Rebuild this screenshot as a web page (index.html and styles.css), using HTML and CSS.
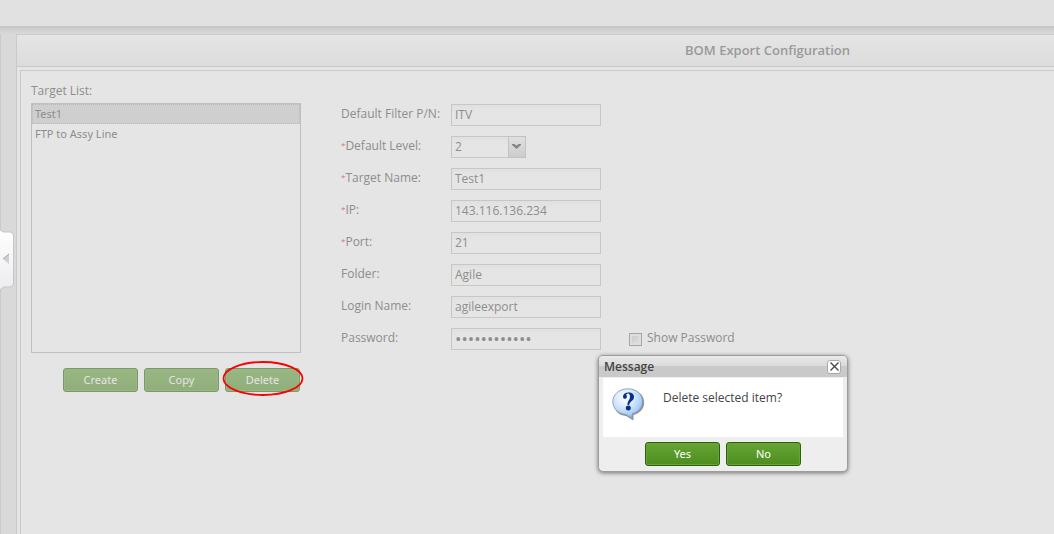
FILE: index.html
```html
<!DOCTYPE html>
<html lang="en">
<head>
<meta charset="utf-8">
<title>BOM Export Configuration</title>
<link rel="stylesheet" href="styles.css">
</head>
<body>
<header class="topbar"></header>
<div class="workspace">
  <aside class="rail">
    <button class="handle" type="button" aria-label="Expand menu">
      <svg width="15" height="62" viewBox="0 0 15 62">
        <defs><linearGradient id="hg" x1="0" y1="0" x2="0" y2="1"><stop offset="0" stop-color="#fff"/><stop offset="1" stop-color="#ececf0"/></linearGradient></defs>
        <path d="M-1 0L3 3H10Q13.500 3 13.500 7V54Q13.500 58 10 58H4L-1 61.500Z" fill="url(#hg)" stroke="#c6c6c6"/>
        <path d="M3 30L9 25V35Z" fill="#cfcfcf"/><path d="M3 30L9 25" stroke="#a4a4a4" fill="none"/>
      </svg>
    </button>
  </aside>
  <main class="panel">
    <h1 class="panel-title">BOM Export Configuration</h1>
    <form class="content">
      <section class="targets">
        <label class="list-label" for="targets">Target List:</label>
        <select class="listbox" id="targets" size="12">
          <option selected>Test1</option>
          <option>FTP to Assy Line</option>
        </select>
        <div class="actions">
          <button class="btn muted" type="button">Create</button>
          <button class="btn muted" type="button">Copy</button>
          <span class="marked">
            <button class="btn muted" type="button">Delete</button>
            <svg class="ellipse" width="82" height="36" viewBox="0 0 82 36"><ellipse cx="41" cy="17.500" rx="39.500" ry="16.500" fill="none" stroke="#fa0000" stroke-width="1.800"/></svg>
          </span>
        </div>
      </section>
      <section class="fields">
        <div class="row"><label for="pn">Default Filter P/N:</label><input class="text" id="pn" type="text" value="ITV"></div>
        <div class="row"><label for="level"><span class="req">*</span>Default Level:</label>
          <span class="combo"><select id="level" class="combo-select"><option>1</option><option selected>2</option><option>3</option></select>
            <span class="trigger"><svg width="10" height="6" viewBox="0 0 10 6"><path d="M0 0H2.500L4.500 1.700L6.500 0H9V1L4.500 5L0 1Z" fill="#858585"/></svg></span></span></div>
        <div class="row"><label for="name"><span class="req">*</span>Target Name:</label><input class="text" id="name" type="text" value="Test1"></div>
        <div class="row"><label for="ip"><span class="req">*</span>IP:</label><input class="text" id="ip" type="text" value="143.116.136.234"></div>
        <div class="row"><label for="port"><span class="req">*</span>Port:</label><input class="text" id="port" type="text" value="21"></div>
        <div class="row"><label for="folder">Folder:</label><input class="text" id="folder" type="text" value="Agile"></div>
        <div class="row"><label for="login">Login Name:</label><input class="text" id="login" type="text" value="agileexport"></div>
        <div class="row"><label for="pass">Password:</label><input class="text secret" id="pass" type="password" value="abcdefghijkl">
          <input class="check" id="show" type="checkbox"><label class="show" for="show">Show Password</label></div>
      </section>
    </form>
  </main>
</div>
<div class="dialog" role="dialog" aria-labelledby="dlg-title">
  <div class="dialog-head">
    <h2 class="dialog-title" id="dlg-title">Message</h2>
    <button class="close" type="button" aria-label="Close"><svg width="9" height="9" viewBox="0 0 9 9"><path d="M.5 .5L8.500 8.500M8.500 .5L.5 8.500" stroke="#444" stroke-width="1.300"/></svg></button>
  </div>
  <div class="dialog-body">
    <svg class="question" width="34" height="34" viewBox="0 0 34 34" role="img" aria-label="Question">
      <defs>
        <radialGradient id="bg" cx=".4" cy=".3" r=".75"><stop offset="0" stop-color="#fff"/><stop offset=".4" stop-color="#d9eafd"/><stop offset=".75" stop-color="#a9cffa"/><stop offset="1" stop-color="#6a98d0"/></radialGradient>
      </defs>
      <path d="M18 1.500C27 1.500 33.200 7 33.200 14.500C33.200 20.500 29.500 25 22.500 27V32.500L15 28C7 27.500 3 22 3 15C3 7.500 9 1.500 18 1.500Z" fill="#666" opacity=".7"/>
      <path d="M17 .8C26 .8 31.500 6.500 31.500 13.500C31.500 19.500 28 24 21.500 25.500L21 31L15.500 26.500C7 26 1.800 20.500 1.800 13.500C1.800 6.500 8 .8 17 .8Z" fill="url(#bg)" stroke="#8796ad" stroke-width=".8"/>
      <path d="M17.500 4.500C21.500 4.500 23 6.500 23 9C23 13 18.600 13.200 18.200 17H16.600C16.200 12.800 19 12 19 9C19 7 18.500 5.800 17 5.600C15.500 5.600 15 6.500 15.600 7.500C16.500 9.200 15.500 10.800 14 10.800C12.800 10.800 12 10 12 8.700C12 6.200 14 4.500 17.500 4.500Z" fill="#0b2f86"/>
      <circle cx="17.300" cy="20" r="2.500" fill="#0b2f86"/>
    </svg>
    <p class="message">Delete selected item?</p>
  </div>
  <div class="dialog-actions"><button class="btn" type="button">Yes</button><button class="btn" type="button">No</button></div>
</div>
</body>
</html>
```
FILE: styles.css
```css
* { box-sizing: border-box; }
body {
  margin: 0;
  height: 100vh;
  display: flex;
  flex-direction: column;
  overflow: hidden;
  background: #d9d9d9;
  color: #8d8d8d;
  font: 12px/16px "Trebuchet MS", "Open Sans", sans-serif;
}
button, input, select { font: inherit; color: inherit; margin: 0; }
.topbar { flex: none; height: 28px; background: #e1e1e1; border-bottom: 2px solid #c7c7c7; }
.workspace {
  flex: 1;
  display: flex;
  padding-top: 6px;
  background: linear-gradient(#cbcbcb, #d9d9d9 6px);
}
.rail { flex: none; width: 16px; border-left: 1px solid #cacaca; position: relative; }
.handle {
  position: absolute;
  left: -1px;
  top: 195px;
  padding: 0;
  border: 0;
  background: none;
  line-height: 0;
}
.panel {
  flex: 1;
  display: flex;
  flex-direction: column;
  border: 1px solid #cacaca;
  border-width: 1px 0 0 1px;
  background: #e5e5e5;
}
.panel-title {
  margin: 0;
  padding: 0 0 0 668px;
  font-size: 13px;
  line-height: 31px;
  font-weight: 600;
  white-space: nowrap;
  color: #999;
  background: linear-gradient(#e5e5e5, #dcdcdc);
  border-bottom: 1px solid #c8c8c8;
}
.content {
  flex: 1;
  display: flex;
  align-items: flex-start;
  gap: 40px;
  margin: 3px 0 0 3px;
  padding: 12px 0 0 10px;
  border: 1px solid #cacaca;
  border-width: 1px 0 0 1px;
}
.targets { width: 270px; display: flex; flex-direction: column; }
.list-label { line-height: 16px; margin-bottom: 4px; }
.listbox {
  height: 250px;
  padding: 0;
  border: 1px solid #bfbfc6;
  border-radius: 0;
  background: #e5e5e5;
  font-family: "Noto Sans", sans-serif;
  font-size: 11px;
  outline: 0;
  overflow: hidden;
}
.listbox option { padding: 2px 3px 0; height: 20px; line-height: 18px; min-height: 20px; color: #8d8d8d; }
.listbox option:checked {
  background: #cfcfcf linear-gradient(#cfcfcf, #cfcfcf);
  outline: 1px dotted #b8b8b8;
  outline-offset: -1px;
}
.actions { display: flex; justify-content: flex-end; gap: 6px; margin: 15px 1px 0 0; }
.btn {
  display: block;
  width: 75px;
  height: 24px;
  padding: 0;
  border: 1px solid #2c6108;
  border-radius: 3px;
  background: linear-gradient(#66a535, #4d8d1f);
  box-shadow: inset 0 0 0 1px #66a33a;
  color: #fff;
  font-family: "Noto Sans", sans-serif;
  font-size: 11px;
}
.btn.muted {
  border-color: #7c9769;
  background: linear-gradient(#99b782, #8fae79);
  box-shadow: inset 0 0 0 1px #9bb786;
  color: #e5e5e5;
}
.marked { position: relative; }
.ellipse { position: absolute; left: -3px; top: -7px; pointer-events: none; }
.fields { display: grid; gap: 10px; padding-top: 21px; }
.row { display: flex; align-items: center; height: 22px; }
.row > label:first-child { width: 110px; padding-bottom: 3px; white-space: nowrap; }
.req { color: #e86868; font-size: 8px; vertical-align: 2px; line-height: 8px; }
.text {
  width: 150px;
  height: 22px;
  padding: 0 3px 1px;
  border: 1px solid #c7c7c7;
  border-radius: 0;
  background: linear-gradient(#dfe1e0, #e5e5e5 8px);
  outline: 0;
}
.secret { font-size: 17px; }
.combo { position: relative; width: 75px; height: 22px; }
.combo-select {
  appearance: none;
  width: 75px;
  height: 22px;
  padding: 0 20px 0 3px;
  border: 1px solid #c7c7c7;
  border-radius: 0;
  background: linear-gradient(#dfe1e0, #e5e5e5 8px);
}
.trigger {
  position: absolute;
  right: 0;
  top: 0;
  width: 18px;
  height: 22px;
  display: grid;
  place-items: center;
  border: 1px solid #c2c2c2;
  background: linear-gradient(#e0e0e0, #cccccc);
  pointer-events: none;
}
.check {
  appearance: none;
  width: 13px;
  height: 13px;
  margin-left: 28px;
  border: 1px solid #a6a6a6;
  background: linear-gradient(135deg, #c6c6c6, #e5e5e5);
  box-shadow: inset 0 0 0 2px #dedede;
}
.show { margin-left: 5px; padding-bottom: 3px; white-space: nowrap; }
.dialog {
  position: absolute;
  left: 598px;
  top: 355px;
  width: 250px;
  padding: 0 4px 5px;
  border: 1px solid #9c9c9c;
  border-radius: 5px;
  background: #eee;
  box-shadow: 0 1px 4px rgba(0, 0, 0, .5);
  color: #444;
}
.dialog-head {
  display: flex;
  justify-content: space-between;
  align-items: center;
  height: 21px;
  margin: 0 -4px 1px;
  padding: 0 6px 0 5px;
  border-radius: 4px 4px 0 0;
  background: linear-gradient(#eaeaea, #dadada 10px, #cacaca 10px, #c9c9c9);
}
.dialog-title { margin: 0; font-size: 12px; line-height: 20px; font-weight: 600; }
.close {
  display: grid;
  place-items: center;
  width: 14px;
  height: 14px;
  padding: 0;
  border: 1px solid #aaa;
  border-radius: 3px;
  background: #fff;
}
.dialog-body { display: flex; gap: 18px; height: 59px; padding: 10px 8px; background: #fff; }
.message { margin: 2px 0 0; }
.dialog-actions { display: flex; justify-content: center; gap: 6px; margin-top: 5px; }
```
